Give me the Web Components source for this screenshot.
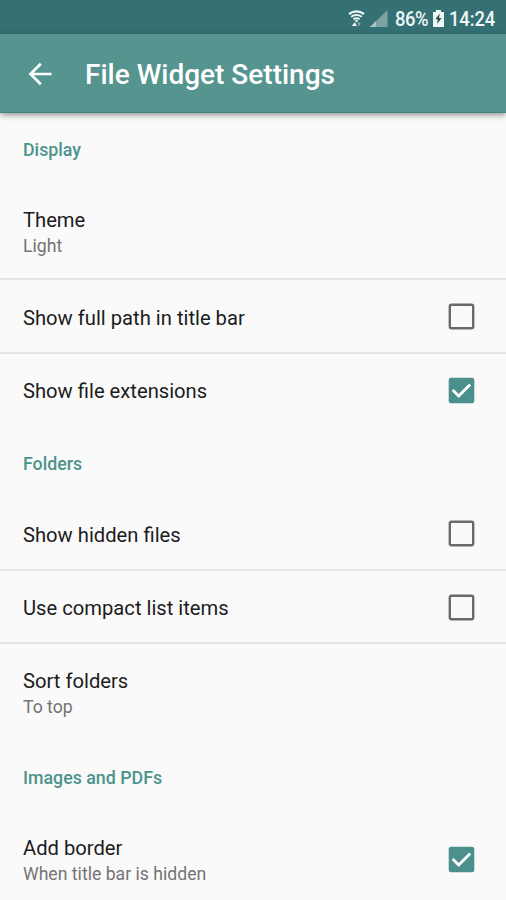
<!DOCTYPE html>
<html lang="en"><head><meta charset="utf-8"><title>File Widget Settings</title>
<style>html,body{margin:0;height:900px;overflow:hidden;background:#fafafa}body{font-family:Roboto,"Liberation Sans",sans-serif}</style></head>
<body><settings-screen></settings-screen>
<script>
function define(name, html) {
  const t = document.createElement('template');
  t.innerHTML = html;
  customElements.define(name, class extends HTMLElement {
    constructor() {
      super();
      this.attachShadow({mode: 'open'}).append(t.content.cloneNode(true));
    }
  });
}
define('status-bar', `<style>
:host{display:flex;height:34px;background:#357074;color:#eef8f7;justify-content:flex-end;align-items:center;padding:3px 10px 0 0;box-sizing:border-box;font-size:20px;line-height:22px;font-weight:500}
svg{display:block;flex:none}
span{display:block;white-space:nowrap;transform:scaleX(.92);transform-origin:left}
.pct{width:34px;margin-left:7px;letter-spacing:-.5px}
.time{width:47px;margin-left:5px;letter-spacing:-.1px}
.bat{margin-left:4px}
</style>
<svg width="17" height="18" viewBox="0 0 17 18" fill="none" stroke="#eef8f7"><path d="M1 4Q8.5-1.2 16 4" stroke-width="2.2"/><path d="M3.2 6.8Q8.5 3 13.8 6.8" stroke-width="1.9"/><path d="M5.4 9.3Q8.5 7 11.6 9.3" stroke-width="1.8"/><path d="M6.4 9.8h4.2l-2.1 2.6z" fill="#eef8f7" stroke="none"/><path d="M3.8 15.9l3-3.9 2 3.9z" fill="#eef8f7" stroke="none"/><path d="M9.2 12.6h3.4l-1.7 3.8z" fill="#89adae" stroke="none"/></svg>
<svg width="18" height="18" viewBox="0 0 18 18" style="margin-left:5px"><path d="M0 17L17.5 0V17z" fill="#7da3a5"/><path d="M0 17L6 11V17z" fill="#a9c4c4"/></svg>
<span class="pct">86%</span>
<svg class="bat" width="11" height="17" viewBox="0 0 11 17"><path d="M3 0h5v2h3v15H0V2h3z" fill="#eef8f7"/><path d="M6.8 3.5L2.3 9.2h2.5L4 14l4.6-6.1H6z" fill="#254b4e"/></svg>
<span class="time">14:24</span>`);
define('app-bar', `<style>
:host{display:flex;position:relative;height:79px;background:#569490;color:#fff;align-items:center;box-sizing:border-box;padding:1px 0 0 28px;box-shadow:0 2px 6px rgba(0,0,0,.42);border-bottom:1px solid #468681}
svg{flex:none}
h1{margin:2px 0 0 33px;font-size:28px;line-height:34px;font-weight:500}
</style>
<svg width="24" height="24" viewBox="0 0 24 24" fill="none" stroke="#fff" stroke-width="2.7"><path d="M23.5 12H2.5M12.8 1.7L2.5 12l10.3 10.3"/></svg>
<h1><slot></slot></h1>`);
define('settings-category', `<style>
:host{display:flex;height:70px;align-items:center;padding:3px 0 0 23px;box-sizing:border-box;color:#4b938c;font-size:17.8px;font-weight:500;line-height:22px}
</style><slot></slot>`);
define('check-box', `<style>
:host{display:block;width:27px;height:27px}
svg{display:block}
.on{display:none}
:host([checked]) .on{display:block}:host([checked]) .off{display:none}
</style>
<svg class="off" width="27" height="27" viewBox="0 0 27 27"><rect x="1.8" y="1.8" width="23.4" height="23.4" rx="1.7" fill="none" stroke="#6a6a6a" stroke-width="2.4"/></svg>
<svg class="on" width="27" height="27" viewBox="0 0 27 27"><rect x=".7" y=".7" width="25.6" height="25.6" rx="2.5" fill="#4b908c"/><path d="M4.7 13.1l6 6L22.2 7.4" fill="none" stroke="#fff" stroke-width="2.8"/></svg>`);
define('settings-item', `<style>
:host{display:flex;height:73.5px;align-items:center;justify-content:space-between;padding:2px 31px 0 23px;box-sizing:border-box;border-bottom:2px solid transparent}
:host([divided]){border-color:#e4e4e4}
:host([tall]){height:97px}
.label{padding-top:2px}
.t{font-size:20.2px;line-height:26px;color:#1c1c1c}
::slotted([slot=summary]){display:block;font-size:17.65px;line-height:26px;color:#747474}
</style>
<div class="label"><div class="t"><slot></slot></div><slot name="summary"></slot></div><slot name="control"></slot>`);
define('settings-screen', `<style>
:host{display:flex;flex-direction:column;width:506px;height:900px;overflow:hidden;background:#fafafa}
:host>*{flex:none}
status-bar,app-bar,settings-category,settings-item{flex:none}
</style>
<status-bar></status-bar>
<app-bar>File Widget Settings</app-bar>
<settings-category>Display</settings-category>
<settings-item tall divided>Theme<span slot="summary">Light</span></settings-item>
<settings-item divided>Show full path in title bar<check-box slot="control"></check-box></settings-item>
<settings-item>Show file extensions<check-box slot="control" checked></check-box></settings-item>
<settings-category>Folders</settings-category>
<settings-item divided>Show hidden files<check-box slot="control"></check-box></settings-item>
<settings-item divided>Use compact list items<check-box slot="control"></check-box></settings-item>
<settings-item tall>Sort folders<span slot="summary">To top</span></settings-item>
<settings-category>Images and PDFs</settings-category>
<settings-item tall>Add border<span slot="summary">When title bar is hidden</span><check-box slot="control" checked></check-box></settings-item>`);
</script></body></html>
